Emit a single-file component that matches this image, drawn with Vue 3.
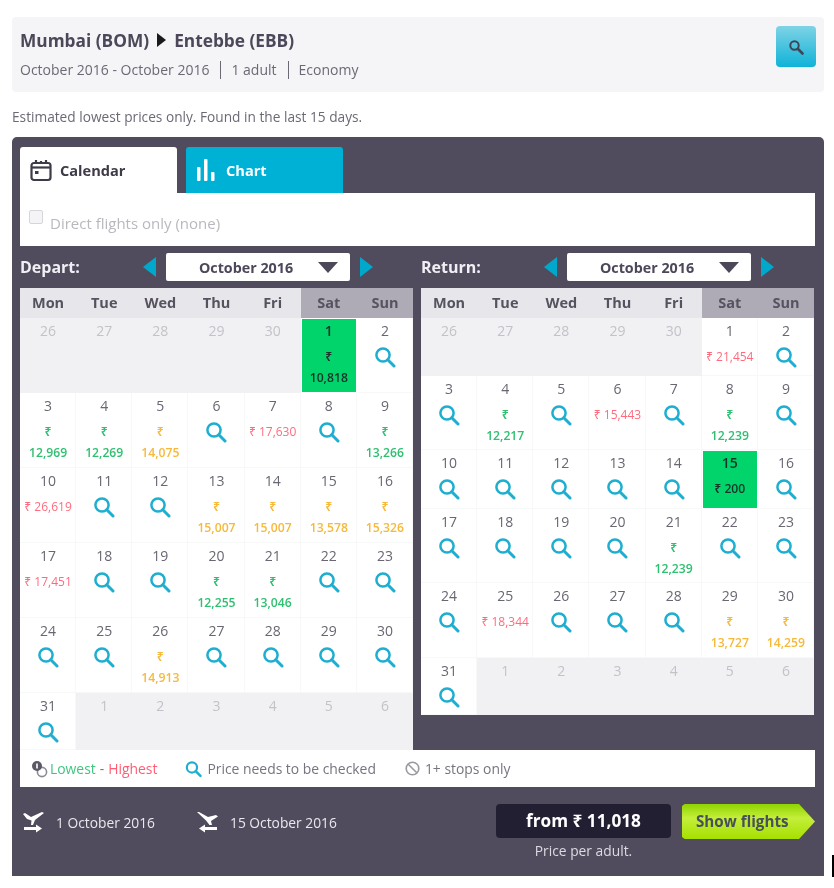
<template>
  <div class="page">
    <div class="summary">
      <div>
        <div class="route">
          Mumbai (BOM)
          <svg class="route-arrow" width="11" height="16" viewBox="0 0 11 16"><path d="M1 1 L10 8 L1 15 Z" fill="#1a1a1a" /></svg>
          Entebbe (EBB)
        </div>
        <div class="trip">
          <span>October 2016 - October 2016</span>
          <span class="sep">1 adult</span>
          <span class="sep">Economy</span>
        </div>
      </div>
      <button class="search-btn">
        <svg width="16" height="16" viewBox="0 0 16 16" fill="none" stroke="#3d4657">
          <circle cx="6.5" cy="6.5" r="4.2" stroke-width="2" />
          <path d="M10 10 L14.5 14.5" stroke-width="2.6" stroke-linecap="round" />
        </svg>
      </button>
    </div>

    <p class="notice">Estimated lowest prices only. Found in the last 15 days.</p>

    <div class="panel">
      <div class="tabs">
        <div class="tab active">
          <svg width="22" height="23" viewBox="0 0 22 23" fill="none" stroke="#3e3a48" stroke-width="2.2">
            <rect x="1.5" y="4" width="19" height="17" rx="2.5" />
            <path d="M1.5 8.5 H20.5" />
            <path d="M6 1 V5 M11 2 V5 M16 1 V5" />
            <rect x="5" y="12" width="3.5" height="3" fill="#3e3a48" stroke="none" />
          </svg>
          Calendar
        </div>
        <div class="tab chart">
          <svg width="20" height="24" viewBox="0 0 20 24" fill="#fff">
            <rect x="1" y="9" width="3.5" height="14" rx="1" />
            <rect x="8" y="1" width="3.5" height="22" rx="1" />
            <rect x="15" y="14" width="3.5" height="9" rx="1" />
          </svg>
          Chart
        </div>
      </div>

      <div class="filter">
        <span class="checkbox"></span>
        <span>Direct flights only (none)</span>
      </div>

      <div class="months">
        <div v-for="cal in calendars" :key="cal.label" class="month" :class="cal.cls">
          <div class="month-head">
            <span class="month-label">{{ cal.label }}</span>
            <span class="tri left"></span>
            <div class="month-select">
              <span>October 2016</span>
              <span class="caret"></span>
            </div>
            <span class="tri right"></span>
          </div>
          <div class="weekdays">
            <div v-for="(d, i) in weekdays" :key="d" class="wd" :class="{ weekend: i > 4 }">{{ d }}</div>
          </div>
          <div class="grid">
            <div
              v-for="(c, i) in cal.cells"
              :key="i"
              class="cell"
              :class="[c.kind, c.tone]"
            >
              <div class="num">{{ c.day }}</div>
              <svg v-if="c.kind === 'check'" class="lens" width="22" height="22" viewBox="0 0 22 22" fill="none" stroke="#1eaed0">
                <circle cx="9" cy="9" r="6.6" stroke-width="2.5" />
                <path d="M13.8 13.8 L20 20" stroke-width="3" stroke-linecap="round" />
              </svg>
              <div v-else-if="c.price" class="price" :class="{ wrap: c.wrap }">
                <span>₹</span> <span>{{ c.price }}</span>
              </div>
            </div>
          </div>
        </div>
      </div>

      <div class="legend">
        <svg width="17" height="18" viewBox="0 0 17 18" fill="none">
          <circle cx="11" cy="12" r="4.6" stroke="#8d8a94" stroke-width="1.6" />
          <circle cx="6" cy="6" r="5" fill="#5b5765" />
          <rect x="5.2" y="3.5" width="1.6" height="5" fill="#fff" />
        </svg>
        <span class="low">Lowest</span>
        <span class="dash">-</span>
        <span class="high">Highest</span>
        <svg class="legend-lens" width="17" height="18" viewBox="0 0 22 22" fill="none" stroke="#1eaed0">
          <circle cx="9" cy="9" r="6.6" stroke-width="2.8" />
          <path d="M13.8 13.8 L20 20" stroke-width="3.2" stroke-linecap="round" />
        </svg>
        <span>Price needs to be checked</span>
        <svg class="legend-stop" width="15" height="15" viewBox="0 0 15 15" fill="none" stroke="#9a98a1" stroke-width="1.6">
          <circle cx="7.5" cy="7.5" r="6.3" />
          <path d="M3.2 3.2 L11.8 11.8" />
        </svg>
        <span>1+ stops only</span>
      </div>

      <div class="footer">
        <div class="dates">
          <div class="date">
            <svg width="23" height="23" viewBox="0 0 23 23" fill="#fff">
              <path d="M1 3 L3 2 L9 6 L20 1 L22 2 L13 9 L11 14 L9 14 L9.5 9.5 L5 8 Z" />
              <path d="M2 16 H14 V13.5 L20 17.5 L14 21.5 V19 H2 Z" />
            </svg>
            1 October 2016
          </div>
          <div class="date">
            <svg width="23" height="23" viewBox="0 0 23 23" fill="#fff">
              <path d="M1 1 L3 1 L12 6 L20 4 L22 5.5 L15 10 L16 14 L13.5 14 L10 9.5 Z" />
              <path d="M21 16 H9 V13.5 L3 17.5 L9 21.5 V19 H21 Z" />
            </svg>
            15 October 2016
          </div>
        </div>
        <div class="total">
          <div class="from">from ₹ 11,018</div>
          <div class="per">Price per adult.</div>
        </div>
        <div class="show">Show flights</div>
      </div>
    </div>
    <span class="cursor"></span>
  </div>
</template>

<script setup>
const weekdays = ['Mon', 'Tue', 'Wed', 'Thu', 'Fri', 'Sat', 'Sun']

// g = green, o = orange, r = red (red prices sit on one line)
function day(n, price, tone) {
  if (price === undefined) return { day: n, kind: 'check' }
  return { day: n, kind: 'priced', price, tone, wrap: tone !== 'r' }
}
function out(n) {
  return { day: n, kind: 'out' }
}
function range(from, to) {
  const list = []
  for (let i = from; i <= to; i++) list.push(i)
  return list
}

const departPrices = {
  3: ['12,969', 'g'], 4: ['12,269', 'g'], 5: ['14,075', 'o'], 7: ['17,630', 'r'], 9: ['13,266', 'g'],
  10: ['26,619', 'r'], 13: ['15,007', 'o'], 14: ['15,007', 'o'], 15: ['13,578', 'o'], 16: ['15,326', 'o'],
  17: ['17,451', 'r'], 20: ['12,255', 'g'], 21: ['13,046', 'g'], 26: ['14,913', 'o'],
}
const returnPrices = {
  1: ['21,454', 'r'], 4: ['12,217', 'g'], 6: ['15,443', 'r'], 8: ['12,239', 'g'], 21: ['12,239', 'g'],
  25: ['18,344', 'r'], 29: ['13,727', 'o'], 30: ['14,259', 'o'],
}

function build(prices, selected) {
  const cells = range(26, 30).map(out)
  range(1, 31).forEach((n) => {
    if (n === selected.day) {
      cells.push({ day: n, kind: 'selected', price: selected.price, wrap: selected.wrap })
    } else if (prices[n]) {
      cells.push(day(n, prices[n][0], prices[n][1]))
    } else {
      cells.push(day(n))
    }
  })
  range(1, 6).forEach((n) => cells.push(out(n)))
  return cells
}

const calendars = [
  { label: 'Depart:', cls: 'depart', cells: build(departPrices, { day: 1, price: '10,818', wrap: true }) },
  { label: 'Return:', cls: 'return', cells: build(returnPrices, { day: 15, price: '200', wrap: false }) },
]
</script>

<style>
body {
  margin: 0;
  background: #fff;
}
</style>

<style scoped>
.page {
  position: relative;
  width: 834px;
  height: 888px;
  padding: 17px 10px 12px 12px;
  box-sizing: border-box;
  font-family: "Open Sans", "Noto Sans", sans-serif;
  color: #4d4859;
  overflow: hidden;
}

/* the source picture is a soft upscale */
.summary,
.notice,
.panel {
  filter: blur(0.7px);
}

.summary {
  height: 75px;
  background: #f5f5f7;
  border-radius: 4px;
  padding: 13px 8px 0;
  box-sizing: border-box;
  display: flex;
  justify-content: space-between;
  align-items: flex-start;
}
.route {
  font-size: 17.3px;
  font-weight: 700;
  line-height: 22px;
  display: flex;
  align-items: center;
  gap: 7px;
}
.route-arrow {
  margin-top: -2px;
}
.trip {
  margin-top: 9px;
  font-size: 14px;
  line-height: 18px;
  color: #6c6975;
  display: flex;
}
.sep {
  border-left: 1px solid #6c6975;
  margin-left: 11px;
  padding-left: 10px;
}
.search-btn {
  width: 40px;
  height: 41px;
  margin-top: -4px;
  border: none;
  border-radius: 4px;
  background: linear-gradient(#7fd3e6, #0fb3d8);
  display: flex;
  align-items: center;
  justify-content: center;
  padding: 0;
}

.notice {
  margin: 17px 0 12px;
  font-size: 13.7px;
  line-height: 16px;
  color: #6c6975;
}

.panel {
  height: 739px;
  background: #514b5e;
  border-radius: 5px 5px 0 0;
  padding: 10px 9px 0 8px;
  box-sizing: border-box;
}

.tabs {
  display: flex;
  gap: 9px;
  height: 46px;
}
.tab {
  width: 157px;
  border-radius: 3px 3px 0 0;
  box-sizing: border-box;
  padding-left: 10px;
  display: flex;
  align-items: center;
  gap: 8px;
  font-size: 14.6px;
  font-weight: 700;
}
.tab.active {
  background: #fff;
  color: #3e3a48;
}
.tab.chart {
  background: #00b1d6;
  color: #fff;
  gap: 10px;
}

.filter {
  height: 53px;
  background: #fff;
  padding: 20px 0 0 9px;
  box-sizing: border-box;
  font-size: 15px;
  line-height: 20px;
  color: #b9b8bf;
  display: flex;
  gap: 7px;
}
.checkbox {
  width: 14px;
  height: 14px;
  border: 1px solid #d6d6da;
  border-radius: 2px;
  background: #f4f4f6;
  box-sizing: border-box;
  margin-top: -3px;
}

.months {
  display: flex;
  gap: 8px;
  height: 504px;
}
.month {
  width: 393px;
}
.month-head {
  height: 42px;
  display: flex;
  align-items: center;
  box-sizing: border-box;
  color: #fff;
}
.month-label {
  width: 123px;
  font-size: 16px;
  font-weight: 700;
  color: #f0eff3;
}
.tri {
  width: 0;
  height: 0;
  border-top: 10px solid transparent;
  border-bottom: 10px solid transparent;
}
.tri.left {
  border-right: 13px solid #00a9cc;
}
.tri.right {
  border-left: 13px solid #00a9cc;
}
.month-select {
  width: 184px;
  height: 28px;
  margin: 0 10px;
  background: #fff;
  border-radius: 2px;
  color: #4d4859;
  font-size: 14.3px;
  font-weight: 700;
  display: flex;
  align-items: center;
  justify-content: center;
  position: relative;
  padding-right: 24px;
  box-sizing: border-box;
}
.caret {
  position: absolute;
  right: 12px;
  top: 9px;
  width: 0;
  height: 0;
  border-left: 10px solid transparent;
  border-right: 10px solid transparent;
  border-top: 11px solid #4d4859;
}

.weekdays {
  display: grid;
  grid-template-columns: repeat(7, 1fr);
  height: 30px;
}
.wd {
  background: #e6e6eb;
  text-align: center;
  font-size: 14.5px;
  font-weight: 700;
  line-height: 30px;
  color: #56525f;
}
.wd.weekend {
  background: #aeabb6;
}

.grid {
  display: grid;
  grid-template-columns: repeat(7, 1fr);
  background: #fff;
}
.depart .grid {
  grid-template-rows: repeat(5, 75px) 57px;
}
.return .grid {
  grid-template-rows: 58px 74px 59px 74px 75px 57px;
}

.cell {
  background: #fff;
  box-shadow: inset -1px -1px 0 #f7f8f8;
  padding-top: 4px;
  box-sizing: border-box;
  text-align: center;
  font-size: 14px;
  color: #6a6672;
}
.num {
  line-height: 18px;
}
.cell.out {
  background: #f1f1f4;
  box-shadow: none;
  color: #c2c2c8;
}
.cell.selected {
  background: #00d46a;
  color: #14352a;
  box-shadow: inset 0 0 0 1px #fff;
  font-weight: 600;
}
.lens {
  display: block;
  margin: 6px auto 0;
}
.price {
  margin-top: 6px;
  font-size: 12.2px;
  font-weight: 600;
  line-height: 21px;
}
.price.wrap span {
  display: block;
}
.cell.g .price {
  color: #2fbf71;
}
.cell.o .price {
  color: #f6b93b;
}
.cell.r .price {
  color: #ff6b7d;
  font-weight: 400;
  font-size: 12px;
}
.cell.selected .price {
  color: #14352a;
}

.legend {
  height: 37px;
  background: #fff;
  display: flex;
  align-items: center;
  padding-left: 11px;
  font-size: 13.9px;
  color: #77747f;
  gap: 2px;
}
.low {
  color: #3fc57f;
}
.dash {
  margin: 0 2px;
}
.high {
  color: #ff5d75;
}
.legend-lens {
  margin-left: 26px;
  margin-right: 3px;
}
.legend-stop {
  margin-left: 27px;
  margin-right: 3px;
}

.footer {
  display: flex;
  align-items: flex-start;
  padding-top: 17px;
}
.dates {
  display: flex;
  gap: 41px;
  padding-left: 2px;
  margin-top: 7px;
  width: 476px;
  box-sizing: border-box;
}
.date {
  display: flex;
  align-items: center;
  gap: 11px;
  font-size: 13.8px;
  color: #e9e8ec;
}
.total {
  width: 175px;
  text-align: center;
}
.from {
  height: 34px;
  background: #231f33;
  border-radius: 4px;
  color: #fff;
  font-size: 17.2px;
  font-weight: 700;
  line-height: 34px;
}
.per {
  margin-top: 5px;
  font-size: 13.8px;
  line-height: 16px;
  color: #dcdbe2;
}
.show {
  width: 133px;
  height: 35px;
  margin-left: 11px;
  background: linear-gradient(#8fd400, #c4ee3a 40%, #a6e000);
  clip-path: polygon(0 6%, 2% 0, 88% 0, 100% 50%, 88% 100%, 2% 100%, 0 94%);
  color: #47505a;
  font-size: 15.2px;
  font-weight: 700;
  line-height: 35px;
  padding-left: 14px;
  box-sizing: border-box;
}

.cursor {
  position: absolute;
  left: 832px;
  top: 855px;
  width: 2px;
  height: 22px;
  background: #000;
}
</style>
